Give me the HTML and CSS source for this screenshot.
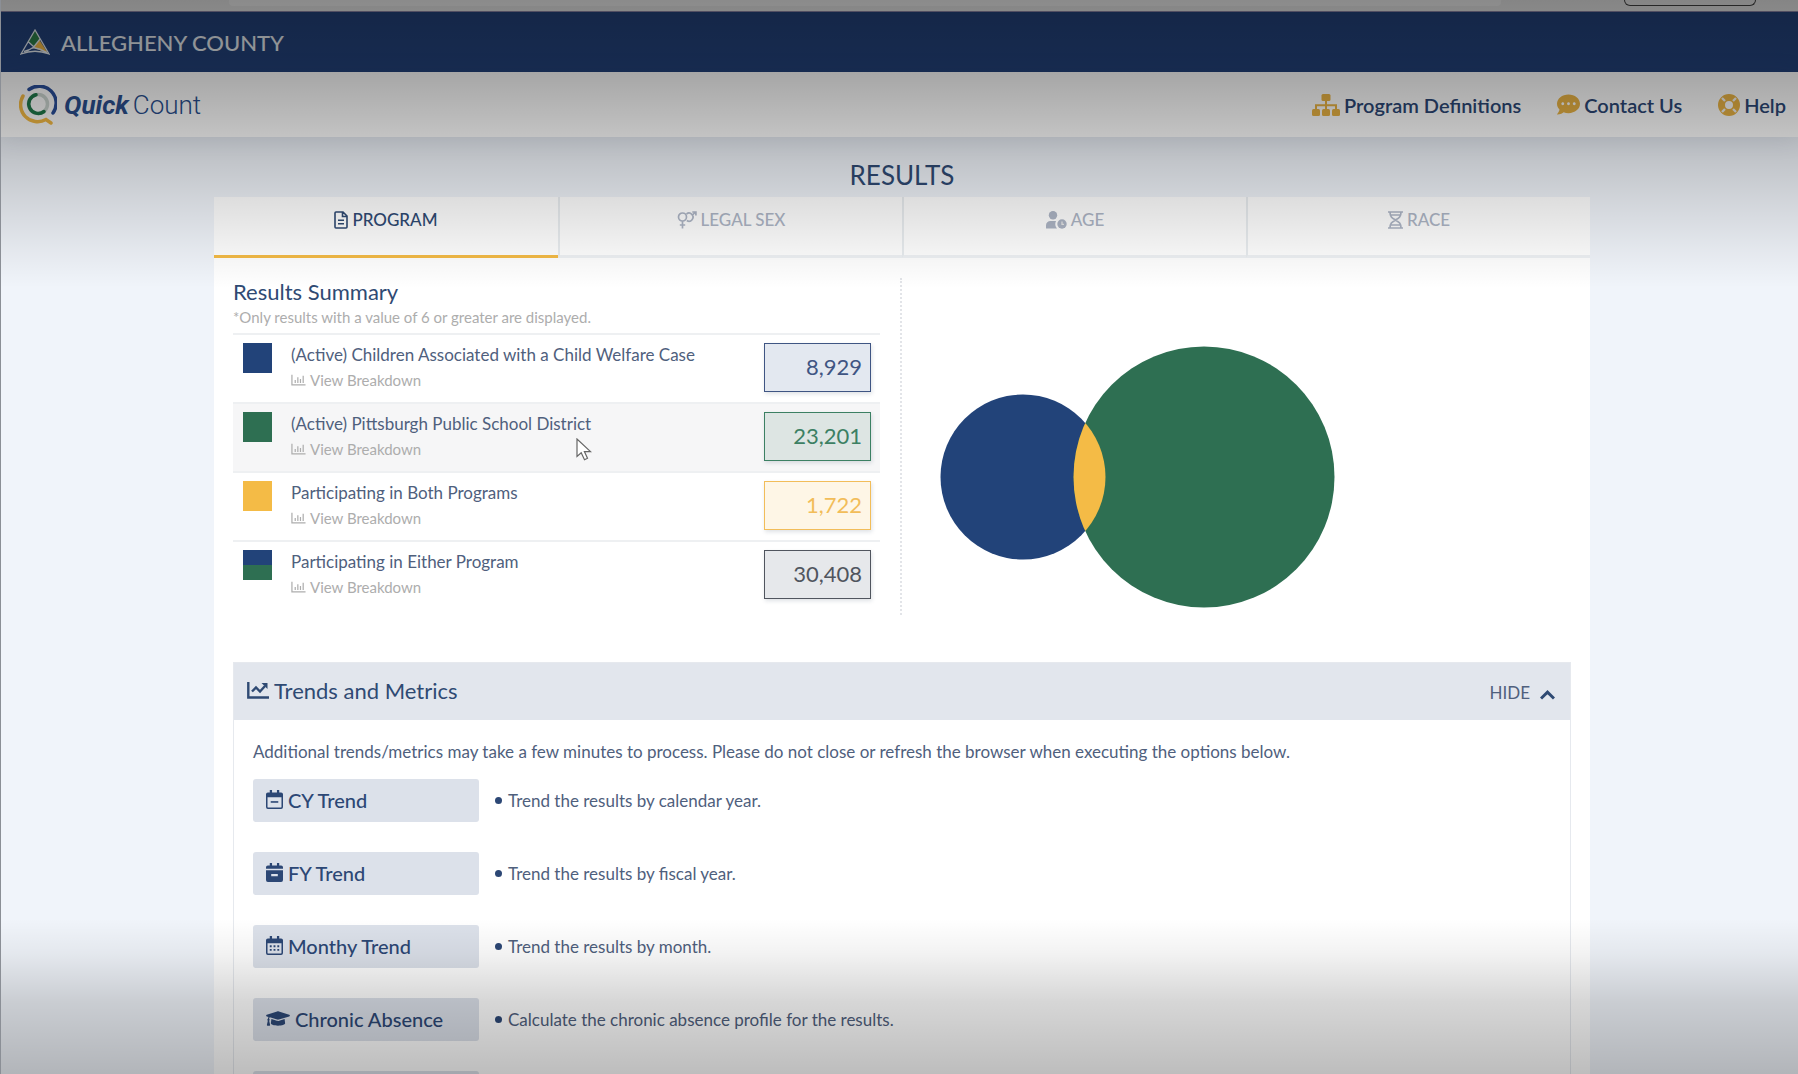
FILE: index.html
```html
<!DOCTYPE html>
<html lang="en">
<head>
<meta charset="utf-8">
<title>Quick Count - Results</title>
<link rel="stylesheet" href="styles.css">
</head>
<body>
<svg class="sprite" aria-hidden="true">
  <symbol id="chart-bar" viewBox="0 0 16 12">
    <path d="M1 .5V11.2H15.5M4.5 6V9.2M7.3 3V9.2M10.1 5V9.2M13 1.5V9.2" fill="none" stroke="currentColor" stroke-width="1.3"/>
  </symbol>
  <symbol id="calendar-frame" viewBox="0 0 18 20">
    <path d="M4 0h2.4v2.5h5.2V0H14v2.5h2A2 2 0 0 1 18 4.500V18a2 2 0 0 1-2 2H2a2 2 0 0 1-2-2V4.500a2 2 0 0 1 2-2h2zM1.600 7.500v10.400c0 .3.200.5.500.5h13.800c.3 0 .5-.2.500-.5V7.500z" fill="currentColor" fill-rule="evenodd"/>
  </symbol>
</svg>

<div class="page">
  <div class="browser-bar">
    <div class="address"></div>
    <div class="pill"></div>
  </div>

  <header>
    <div class="county">
      <svg class="county-logo" viewBox="0 0 30 26" aria-hidden="true">
        <path d="M15 1 8.500 12 14 17.500 20 10z" fill="#2e8049"/>
        <path d="M19.500 11 13 18.500 28 24.500z" fill="#f5bb45"/>
        <path d="M15 1 1 25Q15 19.500 29 25zM8 12.500 14 18M20 10 12.500 19.500M4 22.500Q9 21.500 13 18.500 20 19.500 27 23.500" fill="none" stroke="#e8edf2" stroke-width="1.300"/>
      </svg>
      <span>ALLEGHENY COUNTY</span>
    </div>
    <div class="site">
      <a class="brand" href="#">
        <svg class="brand-logo" viewBox="0 0 38 40" fill="none" stroke-linecap="round" aria-hidden="true">
          <path d="M10 4.500A17 17 0 0 1 34 28" stroke="#2a4f9b" stroke-width="3.500"/>
          <path d="M4 11A17 17 0 0 0 27 34.500L32 38" stroke="#f5bb45" stroke-width="3.500"/>
          <circle cx="19" cy="19" r="9.500" stroke="#ced8d3" stroke-width="3.500"/>
          <path d="M17 9.700A9.500 9.500 0 1 0 25 26.500" stroke="#1f7a4a" stroke-width="3.500"/>
        </svg>
        <span class="wordmark"><b>Quick</b><span>Count</span></span>
      </a>
      <nav>
        <a href="#">
          <svg width="28" height="22" viewBox="0 0 28 22" fill="currentColor" aria-hidden="true">
            <rect x="9.500" y="0" width="9" height="7" rx="1.500"/><rect x="0" y="15" width="8" height="7" rx="1.500"/><rect x="10" y="15" width="8" height="7" rx="1.500"/><rect x="20" y="15" width="8" height="7" rx="1.500"/>
            <path d="M4 16V11.200H24V16M14 6V16" fill="none" stroke="currentColor" stroke-width="2"/>
          </svg>
          <span>Program Definitions</span></a>
        <a href="#">
          <svg width="23" height="23" viewBox="0 0 512 512" fill="currentColor" aria-hidden="true"><path d="M256 32C114.600 32 0 125.100 0 240c0 49.600 21.400 95 57 130.700C44.500 421.100 2.700 466 2.200 466.500c-2.200 2.300-2.800 5.700-1.500 8.700S4.800 480 8 480c66.300 0 116-31.800 140.600-51.400 32.700 12.300 69 19.400 107.400 19.400 141.400 0 256-93.100 256-208S397.400 32 256 32zM128 272c-17.700 0-32-14.300-32-32s14.300-32 32-32 32 14.300 32 32-14.300 32-32 32zm128 0c-17.700 0-32-14.300-32-32s14.300-32 32-32 32 14.300 32 32-14.300 32-32 32zm128 0c-17.700 0-32-14.300-32-32s14.300-32 32-32 32 14.300 32 32-14.300 32-32 32z"/></svg>
          <span>Contact Us</span></a>
        <a href="#">
          <svg width="22" height="22" viewBox="0 0 22 22" fill="none" aria-hidden="true"><circle cx="11" cy="11" r="7.500" stroke="currentColor" stroke-width="7"/><path d="M4 4 7 7M18 4 15 7M4 18 7 15M18 18 15 15" stroke="#f4f4f4" stroke-width="2.400"/></svg>
          <span>Help</span></a>
      </nav>
    </div>
  </header>

  <main>
    <h1>RESULTS</h1>
    <div class="tabs" role="tablist">
      <button class="tab active" role="tab" aria-selected="true">
        <svg width="14" height="18" viewBox="0 0 14 18" fill="none" stroke="currentColor" stroke-width="1.600" aria-hidden="true"><path d="M2 1H9L13 5V16a1 1 0 0 1-1 1H2a1 1 0 0 1-1-1V2a1 1 0 0 1 1-1zM8.500 1V5.500H13M4 9.300H10M4 12.800H10"/></svg>PROGRAM</button>
      <button class="tab" role="tab" aria-selected="false">
        <svg width="20" height="18" viewBox="0 0 20 18" fill="none" stroke="currentColor" stroke-width="1.700" aria-hidden="true"><circle cx="5.500" cy="6" r="4"/><path d="M5.500 10V17.500M2.800 14H8.200M9.500 3A4 4 0 1 1 9.800 9.500M15 4.500 18.500 1M15.300 1H18.900V4.500"/></svg>LEGAL SEX</button>
      <button class="tab" role="tab" aria-selected="false">
        <svg width="21" height="18" viewBox="0 0 21 18" aria-hidden="true"><circle cx="7" cy="4.300" r="4.200" fill="currentColor"/><path d="M0 17.500V14.500C0 11.500 2 10 4.500 10h5.500a7 7 0 0 0 1 7.500z" fill="currentColor"/><circle cx="16" cy="13" r="4.700" fill="currentColor"/><path d="M16 10.500V13.300H18" fill="none" stroke="#e8e8e8" stroke-width="1.300"/></svg>AGE</button>
      <button class="tab" role="tab" aria-selected="false">
        <svg width="15" height="18" viewBox="0 0 15 18" fill="none" stroke="currentColor" stroke-width="1.700" aria-hidden="true"><path d="M0 1H15M0 17H15M2 1C2 6 4 7 7.500 9 11 11 13 12 13 17M13 1C13 6 11 7 7.500 9 4 11 2 12 2 17M3 4H12M3 14H12"/></svg>RACE</button>
    </div>

    <section class="panel">
      <div class="overview">
        <div class="summary">
          <h2>Results Summary</h2>
          <p class="note">*Only results with a value of 6 or greater are displayed.</p>
          <ul class="rows">
            <li>
              <span class="swatch blue"></span>
              <div class="label"><span>(Active) Children Associated with a Child Welfare Case</span>
                <a href="#"><svg width="15" height="12" aria-hidden="true"><use href="#chart-bar"/></svg>View Breakdown</a></div>
              <span class="value blue">8,929</span>
            </li>
            <li class="hovered">
              <span class="swatch green"></span>
              <div class="label"><span>(Active) Pittsburgh Public School District</span>
                <a href="#"><svg width="15" height="12" aria-hidden="true"><use href="#chart-bar"/></svg>View Breakdown</a></div>
              <span class="value green">23,201</span>
              <svg class="cursor" viewBox="0 0 16 23" aria-hidden="true"><path d="M1 1V18.500L5.200 14.800 8.500 21.800 11.500 20.300 8.400 13.600H14.500z" fill="#fff" stroke="#666" stroke-width="1.200"/></svg>
            </li>
            <li>
              <span class="swatch gold"></span>
              <div class="label"><span>Participating in Both Programs</span>
                <a href="#"><svg width="15" height="12" aria-hidden="true"><use href="#chart-bar"/></svg>View Breakdown</a></div>
              <span class="value gold">1,722</span>
            </li>
            <li>
              <span class="swatch either"></span>
              <div class="label"><span>Participating in Either Program</span>
                <a href="#"><svg width="15" height="12" aria-hidden="true"><use href="#chart-bar"/></svg>View Breakdown</a></div>
              <span class="value gray">30,408</span>
            </li>
          </ul>
        </div>
        <div class="venn">
          <svg width="396" height="262" viewBox="0 0 396 262" role="img" aria-label="Overlap of both programs">
            <defs><clipPath id="left-set"><circle cx="83" cy="131" r="82.500"/></clipPath></defs>
            <circle cx="83" cy="131" r="82.500" fill="#224379"/>
            <circle cx="264" cy="131" r="130.500" fill="#2e6f52"/>
            <circle cx="264" cy="131" r="130.500" fill="#f4bb46" clip-path="url(#left-set)"/>
          </svg>
        </div>
      </div>

      <div class="trends">
        <div class="trends-head">
          <h2><svg width="22" height="17" viewBox="0 0 22 17" fill="none" stroke="currentColor" aria-hidden="true"><path d="M1.300 0V15.500H22" stroke-width="2.400"/><path d="M5 9.500 9 5.500 13 9.500 18 4" stroke-width="2.400"/><path d="M14.500 1H20.500V7z" fill="currentColor" stroke="none"/></svg>Trends and Metrics</h2>
          <button class="toggle">HIDE<svg width="15" height="14" viewBox="0 0 15 14" fill="none" stroke="currentColor" stroke-width="3" aria-hidden="true"><path d="M1 12.500 7.500 6.200 14 12.500"/></svg></button>
        </div>
        <div class="trends-body">
          <p>Additional trends/metrics may take a few minutes to process. Please do not close or refresh the browser when executing the options below.</p>
          <div class="option">
            <button><svg width="17" height="19" viewBox="0 0 18 20" aria-hidden="true"><use href="#calendar-frame" width="18" height="20"/><path d="M5 12.600H13" stroke="currentColor" stroke-width="1.700"/></svg>CY Trend</button>
            <span class="desc">Trend the results by calendar year.</span>
          </div>
          <div class="option">
            <button><svg width="17" height="19" viewBox="0 0 18 20" aria-hidden="true"><path d="M4 0h2.400v2.500h5.200V0H14v2.500h2a2 2 0 0 1 2 2V6H0V4.500a2 2 0 0 1 2-2h2zM0 7.500h18V18a2 2 0 0 1-2 2H2a2 2 0 0 1-2-2zM5.500 11.500v2.600h7v-2.600z" fill="currentColor" fill-rule="evenodd"/></svg>FY Trend</button>
            <span class="desc">Trend the results by fiscal year.</span>
          </div>
          <div class="option">
            <button><svg width="17" height="19" viewBox="0 0 18 20" aria-hidden="true"><use href="#calendar-frame" width="18" height="20"/><path d="M4 10.800H14M4 14.600H14" stroke="currentColor" stroke-width="2" stroke-dasharray="2 2"/></svg>Monthy Trend</button>
            <span class="desc">Trend the results by month.</span>
          </div>
          <div class="option">
            <button><svg width="24" height="19" viewBox="0 0 640 512" fill="currentColor" aria-hidden="true"><path d="M622.340 153.200L343.400 67.500c-15.200-4.670-31.600-4.670-46.790 0L17.660 153.200c-23.540 7.230-23.540 38.360 0 45.590l48.630 14.940c-10.670 13.190-17.230 29.280-17.880 46.900C38.780 266.150 32 276.110 32 288c0 10.780 5.680 19.850 13.860 25.650L20.330 428.530C18.110 438.520 25.710 448 35.940 448h56.110c10.240 0 17.840-9.480 15.620-19.470L82.140 313.650C90.320 307.850 96 298.780 96 288c0-11.570-6.470-21.250-15.660-26.870.760-15.020 8.440-28.300 20.690-36.720L296.600 284.500c9.060 2.780 26.440 6.250 46.790 0l278.950-85.700c23.550-7.240 23.550-38.360 0-45.600zM352.790 315.090c-28.530 8.760-52.840 3.920-65.590 0l-145.020-44.550L128 384c0 35.350 85.960 64 192 64s192-28.650 192-64l-14.180-113.470-145.030 44.560z"/></svg>Chronic Absence</button>
            <span class="desc">Calculate the chronic absence profile for the results.</span>
          </div>
          <div class="option"><button aria-label="More"></button></div>
        </div>
      </div>
    </section>
  </main>
  <div class="shade"></div>
</div>
</body>
</html>
```

FILE: styles.css
```css
* { box-sizing: border-box; }

body {
  margin: 0;
  font-family: Lato, "Liberation Sans", sans-serif;
  font-size: 16px;
  color: #4f607d;
}

h1, h2, p, ul { margin: 0; padding: 0; font-weight: 400; }
button { font: inherit; color: inherit; border: 0; background: none; padding: 0; }
a { color: inherit; text-decoration: none; }
svg { flex: none; }
.sprite { position: absolute; width: 0; height: 0; }

.page {
  position: relative;
  height: 100vh;
  overflow: hidden;
  background: #f0f4fa;
  border-left: 1px solid #8b8f96;
}

/* dimming at the top and bottom edges */
.shade {
  position: absolute;
  inset: 0;
  pointer-events: none;
  background:
    linear-gradient(rgba(0,0,0,.43), rgba(0,0,0,.35) 72px, rgba(0,0,0,.24) 135px, rgba(0,0,0,.13) 200px, rgba(0,0,0,.05) 250px, transparent 288px),
    linear-gradient(to top, rgba(0,0,0,.26), rgba(0,0,0,.16) 72px, rgba(0,0,0,.05) 120px, transparent 155px);
}

.browser-bar {
  display: flex;
  justify-content: space-between;
  height: 12px;
  padding: 0 42px 0 228px;
  background: #eaeaea;
  border-bottom: 1px solid #8d88a8;
}
.address { width: 1272px; height: 6px; background: #f4f4f4; border-radius: 0 0 4px 4px; }
.pill { width: 132px; height: 6px; border: 1px solid #444; border-top: 0; border-radius: 0 0 14px 14px; }

.county {
  display: flex;
  align-items: center;
  gap: 11px;
  height: 60px;
  padding-left: 19px;
  background: #23427b;
  color: #e8edf2;
  font-size: 22px;
  font-weight: 500;
}
.county-logo { width: 30px; height: 26px; }

.site {
  display: flex;
  align-items: center;
  justify-content: space-between;
  height: 65px;
  padding: 0 12px 0 18px;
  background: #fff;
  box-shadow: 0 2px 24px rgba(40,60,90,.1);
}
.brand { display: flex; align-items: center; gap: 7px; }
.brand-logo { width: 38px; height: 40px; }
.wordmark { display: flex; gap: 4px; font-family: Roboto, sans-serif; font-size: 26px; font-weight: 300; color: #2a4f8f; }
.wordmark b { font-weight: 700; font-style: italic; }
nav { display: flex; gap: 36px; font-size: 20px; font-weight: 600; color: #2c4775; }
nav a { display: flex; align-items: center; gap: 4px; }
nav svg { color: #eab445; }

main { padding: 22px 208px 0 213px; }
h1 { text-align: center; font-size: 26px; line-height: 32px; margin-bottom: 6px; color: #2f4a73; }

.tabs { display: grid; grid-template-columns: repeat(4, 1fr); background: #fff; }
.tab {
  display: flex;
  justify-content: center;
  gap: 4px;
  height: 61px;
  padding-top: 14px;
  font-size: 17px;
  font-weight: 500;
  line-height: 18px;
  color: #adb5c5;
  border-bottom: 3px solid #eef1f4;
  border-left: 2px solid #e9edf0;
}
.tab.active { color: #2f4a73; border-bottom-color: #f4bb46; border-left: 0; }

.panel { background: #fff; padding: 20px 19px 40px; }
.overview { display: grid; grid-template-columns: 1fr 1fr; }
.summary { height: 337px; padding-right: 20px; border-right: 2px dotted #e2e4e8; }
.summary h2 { font-size: 22px; line-height: 28px; color: #2f4a73; }
.note { font-size: 15px; line-height: 22px; color: #adadad; margin-bottom: 5px; }
.rows { list-style: none; }
.rows li {
  position: relative;
  display: flex;
  height: 69px;
  padding: 8px 9px 0 10px;
  border-top: 2px solid #eef0f2;
}
.hovered { background: #f6f6f7; }
.swatch { width: 29px; height: 30px; margin-right: 19px; }
.swatch.blue { background: #224379; }
.swatch.green { background: #2e6f52; }
.swatch.gold { background: #f4bb46; }
.swatch.either { background: linear-gradient(#224379 50%, #2e6f52 50%); }
.label { flex: 1; font-size: 17px; line-height: 24px; }
.label span { display: block; }
.label a { display: flex; align-items: center; gap: 4px; font-size: 15px; line-height: 26px; color: #adadad; }
.value {
  width: 107px;
  height: 49px;
  padding-right: 8px;
  border: 1px solid;
  font-size: 22px;
  line-height: 45px;
  text-align: right;
  box-shadow: 1px 2px 4px rgba(40,60,90,.15);
}
.value.blue { color: #3f5583; background: #e3e8f0; }
.value.green { color: #3c8063; background: #dde5e3; }
.value.gold { color: #f2bd59; background: #fef6e6; }
.value.gray { color: #50555e; background: #e6e8eb; }
.cursor { position: absolute; left: 343px; top: 34px; width: 16px; height: 23px; }

.venn { padding: 68px 0 0 38px; }

.trends { margin-top: 47px; border: 1px solid #e6e9ee; }
.trends-head {
  display: flex;
  align-items: center;
  justify-content: space-between;
  height: 57px;
  padding: 0 15px 2px 13px;
  background: #e2e6ed;
}
.trends-head h2 { display: flex; align-items: center; gap: 5px; font-size: 22px; line-height: 26px; color: #2f4a73; }
.toggle { display: flex; align-items: center; gap: 10px; padding-top: 4px; font-size: 17px; }
.toggle svg { color: #2f4a73; }
.trends-body { padding: 20px 19px; font-size: 17px; }
.trends-body p { line-height: 24px; margin-bottom: 15px; }
.option { display: flex; align-items: center; gap: 16px; margin-bottom: 30px; }
.option button {
  display: flex;
  align-items: center;
  gap: 5px;
  width: 226px;
  height: 43px;
  padding: 0 0 2px 13px;
  background: #dce1ea;
  border-radius: 3px;
  font-size: 20px;
  font-weight: 500;
  color: #2c4775;
}
.desc { display: flex; align-items: center; gap: 6px; }
.desc::before { content: ""; width: 7px; height: 7px; border-radius: 50%; background: #2c4775; }
```
